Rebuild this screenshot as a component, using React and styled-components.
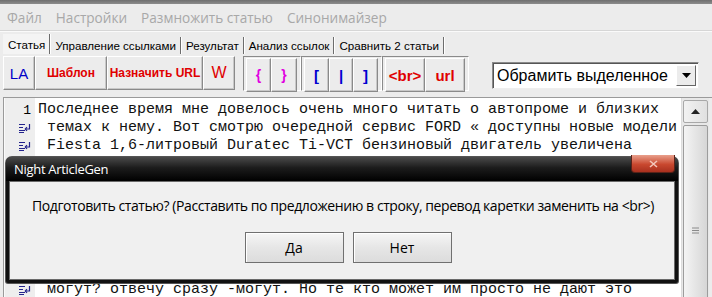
import React from "react";
import styled, { createGlobalStyle } from "styled-components";

const Global = createGlobalStyle`
  html, body {
    margin: 0;
    padding: 0;
    background: #ececec;
    overflow: hidden;
  }
`;

const Win = styled.div`
  position: relative;
  width: 712px;
  height: 297px;
  overflow: hidden;
  background: #ececec;
  display: flex;
  flex-direction: column;
`;

const TopStrip = styled.div`
  height: 4px;
  background: linear-gradient(#6f6f6f, #8c8c8c);
  flex: none;
`;

const MenuBar = styled.div`
  height: 26px;
  display: flex;
  align-items: center;
  padding-left: 7px;
  gap: 14px;
  font-family: "Open Sans", "Noto Sans", sans-serif;
  font-size: 13.6px;
  color: #a8a8a8;
  border-bottom: 1px solid #d6d6d6;
  box-shadow: 0 1px 0 #fafafa;
  flex: none;
`;

const TabStrip = styled.div`
  height: 21px;
  margin-top: 2px;
  display: flex;
  align-items: flex-end;
  padding-left: 3px;
  font-family: "Liberation Sans", Arial, sans-serif;
  font-size: 11.6px;
  color: #000;
  flex: none;
`;

const Tab = styled.div`
  height: ${p => (p.$active ? 20 : 17)}px;
  display: flex;
  align-items: center;
  padding: 0 4px 0 5px;
  border-right: 1px solid #6d6d6d;
  box-shadow: 1px 0 0 #fff;
  background: ${p => (p.$active ? "#f4f4f4" : "transparent")};
`;

const Toolbar = styled.div`
  display: flex;
  align-items: flex-start;
  padding: 2px 0 0 3px;
  height: 38px;
  flex: none;
`;

const Btn = styled.div`
  box-sizing: border-box;
  height: 34px;
  width: ${p => p.$w}px;
  display: flex;
  align-items: center;
  justify-content: center;
  background: #ececec;
  border-top: 1px solid #fff;
  border-left: 1px solid #fff;
  border-right: 1px solid #8a8a8a;
  border-bottom: 1px solid #8a8a8a;
  box-shadow: inset -1px -1px 0 #c8c8c8;
  font-family: "Liberation Sans", Arial, sans-serif;
  font-weight: ${p => (p.$bold ? 700 : 400)};
  font-size: ${p => p.$size || 12}px;
  color: ${p => p.$color};
`;

const Group = styled.div`
  box-sizing: border-box;
  display: flex;
  height: 35px;
  margin-left: ${p => p.$gap}px;
  padding: 1px 3px 0 2px;
  border-top: 1px solid #8a8a8a;
  border-left: 1px solid #8a8a8a;
  border-right: 1px solid #fff;
  border-bottom: 1px solid #fff;
`;

const Combo = styled.div`
  box-sizing: border-box;
  margin: 6px 0 0 23px;
  width: 207px;
  height: 27px;
  display: flex;
  align-items: center;
  background: #fff;
  border-top: 1px solid #8a8a8a;
  border-left: 1px solid #8a8a8a;
  border-right: 1px solid #eee;
  border-bottom: 1px solid #eee;
  box-shadow: inset 1px 1px 0 #555;
  font-family: "Liberation Sans", Arial, sans-serif;
  font-size: 16px;
  color: #000;
  padding-left: 4px;
`;

const ComboText = styled.span`
  flex: 1;
`;

const ComboArrow = styled.div`
  box-sizing: border-box;
  width: 20px;
  height: 21px;
  margin-right: 2px;
  display: flex;
  align-items: center;
  justify-content: center;
  background: #ececec;
  border-top: 1px solid #fff;
  border-left: 1px solid #fff;
  border-right: 1px solid #666;
  border-bottom: 1px solid #666;
`;

const Editor = styled.div`
  flex: 1;
  margin: 3px 0 0 3px;
  display: flex;
  border-top: 1px solid #9a9a9a;
  border-left: 1px solid #9a9a9a;
  background: #fff;
  min-height: 0;
`;

const Gutter = styled.div`
  width: 30px;
  flex: none;
  background: #eeeeee;
  border-left: 1px solid #fafafa;
  padding-top: 3px;
`;

const GutterRow = styled.div`
  height: 18px;
  display: flex;
  align-items: center;
  justify-content: flex-end;
  padding-right: 4px;
  font-family: "Liberation Mono", monospace;
  font-size: 13px;
  color: #000;
`;

const Text = styled.div`
  flex: 1;
  padding: 3px 0 0 3px;
  font-family: "Liberation Mono", "Courier New", monospace;
  font-size: 15px;
  line-height: 18px;
  color: #111;
  white-space: pre;
  overflow: hidden;
`;

const Scroll = styled.div`
  width: 25px;
  flex: none;
  background: #e8e8e8;
  border-left: 1px solid #dcdcdc;
  border-right: 3px solid #ececec;
  padding: 2px 1px 0 1px;
  display: flex;
  flex-direction: column;
  gap: 2px;
  overflow: hidden;
`;

const ScrollBtn = styled.div`
  height: 23px;
  flex: none;
  box-sizing: border-box;
  border: 1px solid #a8a8a8;
  border-radius: 2px;
  background: linear-gradient(90deg, #f2f2f2, #e0e0e0);
  display: flex;
  align-items: center;
  justify-content: center;
`;

const Thumb = styled.div`
  height: 210px;
  flex: none;
  box-sizing: border-box;
  border: 1px solid #9c9c9c;
  border-radius: 2px;
  background: linear-gradient(90deg, #f4f4f4, #e2e2e2 60%, #d6d6d6);
  display: flex;
  align-items: center;
  justify-content: center;
`;

const Dialog = styled.div`
  position: absolute;
  left: 6px;
  top: 157px;
  width: 672px;
  height: 126px;
  box-sizing: border-box;
  background: #111;
  border-radius: 6px 6px 2px 2px;
  padding: 0 3px 3px 3px;
  display: flex;
  flex-direction: column;
  box-shadow: 0 0 0 1px #555;
`;

const TitleBar = styled.div`
  height: 24px;
  display: flex;
  align-items: center;
  font-family: "Open Sans", "Noto Sans", sans-serif;
  font-size: 13px;
  letter-spacing: -0.3px;
  color: #fff;
  background: linear-gradient(#4a4a4a, #1c1c1c 45%, #000);
  border-radius: 5px 5px 0 0;
  margin: 0 -3px;
  padding-left: 8px;
`;

const CloseBtn = styled.div`
  position: absolute;
  right: 3px;
  top: -2px;
  width: 42px;
  height: 17px;
  border-radius: 0 0 4px 4px;
  border: 1px solid #5a2218;
  border-top: none;
  background: linear-gradient(#e9a08c, #c9482f 55%, #a8301e);
  display: flex;
  align-items: center;
  justify-content: center;
`;

const Body = styled.div`
  flex: 1;
  background: #f0f0f0;
  border: 1px solid #6a6a6a;
  display: flex;
  flex-direction: column;
  align-items: center;
`;

const Message = styled.div`
  margin-top: 14px;
  align-self: flex-start;
  padding-left: 22px;
  font-family: "Open Sans", "Noto Sans", sans-serif;
  font-size: 14px;
  letter-spacing: -0.42px;
  color: #000;
`;

const Buttons = styled.div`
  display: flex;
  gap: 9px;
  margin: 17px 0 0 12px;
`;

const DlgBtn = styled.div`
  box-sizing: border-box;
  width: 99px;
  height: 31px;
  display: flex;
  align-items: center;
  justify-content: center;
  border: 1px solid #707070;
  box-shadow: inset 1px 1px 0 #fff;
  background: linear-gradient(#f6f6f6, #e6e6e6 50%, #dcdcdc);
  font-family: "Open Sans", "Noto Sans", sans-serif;
  font-size: 14px;
  color: #000;
`;

const WrapIcon = () => (
  <svg width="12" height="10" viewBox="0 0 12 10">
    <g stroke="#23238c" strokeWidth="1.2" fill="none">
      <path d="M0 1.5h6M0 4.5h4M0 7.5h6M0 9.5h5" />
      <path d="M10.5 1v5H6.5" />
      <path d="M8 4.2L6.3 6l1.7 1.8" />
    </g>
  </svg>
);

// lines 4..10 sit under the dialog, so they stay blank
const lines = [
  { n: "1", t: "Последнее время мне довелось очень много читать о автопроме и близких" },
  { t: " темах к нему. Вот смотрю очередной сервис FORD « доступны новые модели" },
  { t: " Fiesta 1,6-литровый Duratec Ti-VCT бензиновый двигатель увеличена" },
  { t: "" },
  { t: "" },
  { t: "" },
  { t: "" },
  { t: "" },
  { t: "" },
  { t: "" },
  { t: " могут? отвечу сразу -могут. Но те кто может им просто не дают это" },
];

const menu = ["Файл", "Настройки", "Размножить статью", "Синонимайзер"];
const tabs = ["Статья", "Управление ссылками", "Результат", "Анализ ссылок", "Сравнить 2 статьи"];

export default function App() {
  return (
    <Win>
      <Global />
      <TopStrip />
      <MenuBar>
        {menu.map(m => (
          <span key={m}>{m}</span>
        ))}
      </MenuBar>
      <TabStrip>
        {tabs.map((t, i) => (
          <Tab key={t} $active={i === 0}>
            {t}
          </Tab>
        ))}
      </TabStrip>
      <Toolbar>
        <Btn $w={32} $color="#0000c8" $size={15}>LA</Btn>
        <Btn $w={72} $color="#e00000" $bold>Шаблон</Btn>
        <Btn $w={96} $color="#e00000" $bold>Назначить URL</Btn>
        <Btn $w={32} $color="#e00000" $size={16}>W</Btn>
        <Group $gap={8}>
          <Btn $w={25} $color="#e000e0" $bold $size={14}>{"{"}</Btn>
          <Btn $w={26} $color="#e000e0" $bold $size={14}>{"}"}</Btn>
        </Group>
        <Group $gap={0}>
          <Btn $w={25} $color="#0000d0" $bold $size={15}>[</Btn>
          <Btn $w={24} $color="#0000d0" $bold $size={15}>|</Btn>
          <Btn $w={25} $color="#0000d0" $bold $size={15}>]</Btn>
        </Group>
        <Group $gap={0}>
          <Btn $w={40} $color="#e00000" $bold $size={15}>{"<br>"}</Btn>
          <Btn $w={40} $color="#e00000" $bold $size={15}>url</Btn>
        </Group>
        <Combo>
          <ComboText>Обрамить выделенное</ComboText>
          <ComboArrow>
            <svg width="9" height="5" viewBox="0 0 9 5">
              <path d="M0 0h9L4.5 5z" fill="#000" />
            </svg>
          </ComboArrow>
        </Combo>
      </Toolbar>
      <Editor>
        <Gutter>
          {lines.map((l, i) => (
            <GutterRow key={i}>{l.n ? l.n : <WrapIcon />}</GutterRow>
          ))}
        </Gutter>
        <Text>{lines.map(l => l.t).join("\n")}</Text>
        <Scroll>
          <ScrollBtn>
            <svg width="9" height="5" viewBox="0 0 9 5">
              <path d="M0 5h9L4.5 0z" fill="#222" />
            </svg>
          </ScrollBtn>
          <Thumb>
            <svg width="7" height="7" viewBox="0 0 7 7">
              <path d="M0 1h7M0 3.5h7M0 6h7" stroke="#8a8a8a" strokeWidth="1" />
            </svg>
          </Thumb>
        </Scroll>
      </Editor>
      <Dialog>
        <TitleBar>Night ArticleGen</TitleBar>
        <CloseBtn>
          <svg width="9" height="8" viewBox="0 0 9 8">
            <path d="M1 1l7 6M8 1L1 7" stroke="#f3c6ba" strokeWidth="1.6" />
          </svg>
        </CloseBtn>
        <Body>
          <Message>
            Подготовить статью? (Расставить по предложению в строку, перевод каретки заменить на &lt;br&gt;)
          </Message>
          <Buttons>
            <DlgBtn>Да</DlgBtn>
            <DlgBtn>Нет</DlgBtn>
          </Buttons>
        </Body>
      </Dialog>
    </Win>
  );
}
